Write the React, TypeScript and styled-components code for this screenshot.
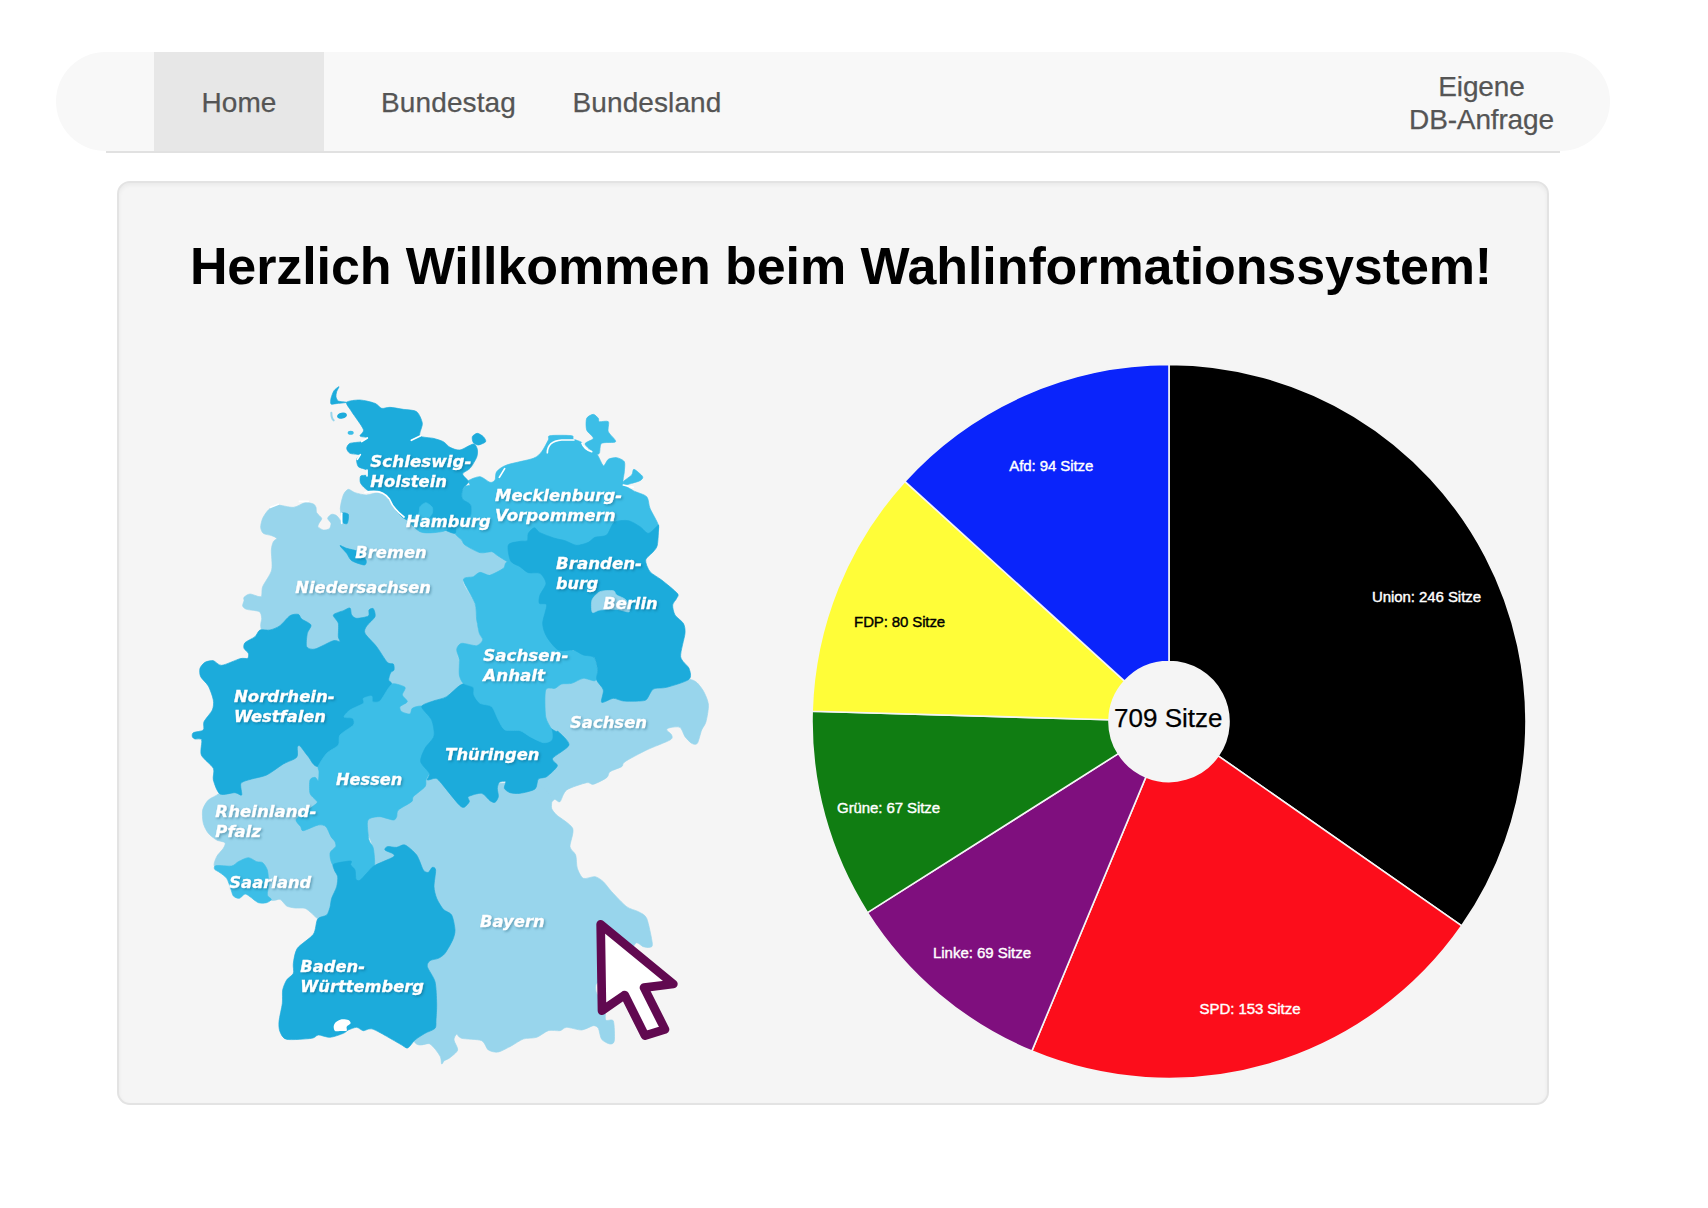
import React from "react";
import styled, { createGlobalStyle } from "styled-components";

const GlobalStyle = createGlobalStyle`
  body {
    margin: 0;
    background: #ffffff;
    font-family: "Liberation Sans", Arial, Helvetica, sans-serif;
  }
`;

const Page = styled.div`
  box-sizing: border-box;
  width: 1708px;
  height: 1208px;
  padding: 52px 98px 0 56px;
  background: #ffffff;
`;

const NavBar = styled.nav`
  display: flex;
  flex-direction: column;
  height: 101px;
`;

const NavItems = styled.div`
  display: flex;
  height: 99px;
  box-sizing: border-box;
  padding: 0 55px 0 98px;
  align-items: stretch;
  background: #f8f8f8;
  border-radius: 50px;
`;

const NavRule = styled.div`
  height: 2px;
  margin: 0 50px;
  background: #e1e1e1;
`;

const NavLink = styled.a<{ $active?: boolean; $width: number; $push?: boolean }>`
  display: flex;
  align-items: center;
  justify-content: center;
  text-align: center;
  white-space: nowrap;
  width: ${(p) => p.$width}px;
  margin-left: ${(p) => (p.$push ? "auto" : "0")};
  padding-top: ${(p) => (p.$push ? 3 : 1)}px;
  box-sizing: border-box;
  font-size: 28px;
  line-height: 33px;
  letter-spacing: ${(p) => (p.$push ? -0.15 : 0.1)}px;
  color: #555555;
  -webkit-text-stroke: 0.25px #555555;
  text-decoration: none;
  background: ${(p) => (p.$active ? "#e7e7e7" : "transparent")};
`;

const NavGap = styled.span`
  width: 29px;
`;

const Well = styled.main`
  box-sizing: border-box;
  width: 1432px;
  height: 924px;
  margin: 28px 0 0 61px;
  border: 2px solid #e3e3e3;
  border-radius: 13px;
  background: #f5f5f5;
  box-shadow: inset 0 2px 4px rgba(0, 0, 0, 0.05);
`;

const Title = styled.h1`
  margin: 0;
  height: 182px;
  box-sizing: border-box;
  padding: 53px 0 0 16px;
  text-align: center;
  white-space: nowrap;
  font-size: 52px;
  line-height: 60px;
  letter-spacing: -0.09px;
  font-weight: bold;
  color: #000000;
`;

const Figures = styled.div`
  display: flex;
  align-items: flex-start;
  gap: 89px;
  padding-left: 61px;
`;

const MapDrawing = styled.svg`
  display: block;
  flex: none;
  width: 540px;
  height: 730px;
  margin-top: 5px;
`;

const MapLabel = styled.text`
  font-family: "DejaVu Sans", Verdana, sans-serif;
  font-weight: bold;
  font-style: italic;
  font-size: 48px;
  fill: #ffffff;
  stroke: #ffffff;
  stroke-width: 1px;
  filter: drop-shadow(4px 4px 3px rgba(0, 60, 90, 0.36));
`;

const Chart = styled.svg`
  display: block;
  flex: none;
  width: 720px;
  height: 720px;
`;

const SliceLabel = styled.text`
  font-size: 15px;
  text-anchor: middle;
  stroke-width: 0.4px;
`;

const TotalLabel = styled.text`
  font-size: 26px;
  text-anchor: middle;
  fill: #000000;
  stroke: #000000;
  stroke-width: 0.25px;
`;

const DARK = "#1cabdb";
const MID = "#3cbee7";
const LIGHT = "#98d5ec";

/* Closed Catmull-Rom curve through a list of "x,y" pairs. */
function outline(list: string): string {
  const p = list
    .trim()
    .split(/\s+/)
    .map((s) => s.split(",").map(Number));
  const n = p.length;
  const k = 0.13;
  let d = `M${p[0][0]} ${p[0][1]}`;
  for (let i = 0; i < n; i++) {
    const a = p[(i - 1 + n) % n];
    const b = p[i];
    const c = p[(i + 1) % n];
    const e = p[(i + 2) % n];
    d += `C${b[0] + (c[0] - a[0]) * k} ${b[1] + (c[1] - a[1]) * k} ${c[0] - (e[0] - b[0]) * k} ${c[1] - (e[1] - b[1]) * k} ${c[0]} ${c[1]}`;
  }
  return d + "Z";
}

const states: { name: string; fill: string; shape: string }[] = [
  {
    name: "Niedersachsen",
    fill: LIGHT,
    shape:
      "245,780 245,745 238,725 200,718 188,708 192,692 192,682 210,672 243,680 248,650 275,600 274,540 280,515 290,505 275,497 250,490 242,472 248,445 265,420 290,405 340,412 375,398 400,402 408,412 410,428 425,445 418,458 414,470 430,480 448,476 453,460 443,445 455,433 470,437 487,455 481,415 490,375 505,358 525,368 560,375 600,367 625,385 640,412 665,440 700,465 750,480 825,488 845,510 855,525 900,548 935,545 950,555 983,575 970,595 945,612 920,612 900,607 880,620 850,630 855,650 880,690 888,715 890,760 898,790 908,812 890,827 845,820 830,838 838,880 842,915 850,935 830,955 810,975 780,990 750,1010 705,1040 640,1040 500,1000 300,860",
  },
  {
    name: "Rheinland-Pfalz",
    fill: LIGHT,
    shape:
      "120,1268 85,1290 68,1320 70,1360 85,1390 110,1410 135,1418 130,1435 110,1460 104,1490 150,1510 180,1550 270,1590 300,1588 320,1608 345,1614 375,1615 395,1630 415,1647 435,1640 470,1580 490,1460 500,1300 440,1190 350,1110 185,1200",
  },
  {
    name: "Sachsen",
    fill: LIGHT,
    shape:
      "1080,960 1125,950 1145,940 1175,938 1210,920 1300,920 1400,945 1527,928 1565,955 1585,1002 1578,1055 1565,1080 1552,1120 1535,1120 1515,1100 1500,1072 1470,1073 1460,1080 1475,1095 1470,1110 1400,1140 1335,1175 1325,1190 1290,1205 1280,1223 1240,1243 1220,1238 1160,1260 1140,1295 1125,1288 1115,1295 1090,1300 1030,1280 1030,1150",
  },
  {
    name: "Bayern",
    fill: LIGHT,
    shape:
      "583,1485 575,1420 555,1370 560,1330 630,1330 690,1280 735,1220 780,1215 860,1240 1060,1240 1105,1270 1115,1290 1115,1315 1130,1335 1178,1375 1170,1430 1187,1455 1192,1495 1210,1525 1245,1520 1270,1535 1295,1565 1340,1610 1375,1625 1400,1645 1417,1720 1410,1732 1390,1730 1370,1718 1355,1735 1300,1790 1255,1835 1247,1848 1250,1870 1275,1915 1277,1950 1300,1953 1303,2012 1290,2022 1265,2008 1255,1975 1240,1967 1205,1980 1160,1972 1140,1982 1105,1982 1070,2002 1030,2007 995,2027 955,2046 925,2040 905,2012 845,2005 830,1993 822,2010 833,2040 810,2063 793,2072 785,2082 780,2058 750,2022 700,2010 650,1800 600,1600",
  },
  {
    name: "Mecklenburg-Vorpommern",
    fill: MID,
    shape:
      "845,370 855,350 870,345 865,332 900,320 930,337 945,330 950,305 980,285 1060,265 1085,245 1105,210 1110,197 1175,197 1180,207 1205,217 1215,235 1250,252 1270,287 1285,268 1310,263 1333,275 1333,305 1330,340 1360,362 1400,380 1410,415 1435,465 1430,490 1400,540 1100,560 1000,575 983,575 950,555 935,545 900,548 855,525 845,510 825,490 830,465 870,440 872,405 850,392",
  },
  {
    name: "Rügen",
    fill: MID,
    shape:
      "1220,180 1220,145 1240,133 1255,145 1258,155 1285,155 1285,185 1307,215 1265,220 1258,250 1245,250 1215,222 1240,205",
  },
  { name: "Usedom", fill: MID, shape: "1335,345 1330,335 1355,315 1362,298 1388,320 1380,332 1355,340" },
  {
    name: "Schleswig-Holstein",
    fill: DARK,
    shape:
      "500,97 540,90 585,100 605,115 630,112 670,118 710,125 727,160 720,197 760,205 790,215 810,232 840,240 880,222 892,238 890,262 870,295 848,312 865,335 850,355 845,375 850,390 872,405 870,440 830,465 825,490 790,480 760,485 700,460 665,440 640,410 625,385 600,363 565,362 542,340 542,318 560,315 560,300 535,290 530,268 540,255 510,250 500,235 510,220 545,215 562,203 540,198 550,178 515,125",
  },
  { name: "Fehmarn", fill: DARK, shape: "877,200 892,190 910,200 917,215 895,225 880,218" },
  { name: "Sylt", fill: DARK, shape: "477,50 462,62 453,85 453,102 468,101 500,97 475,93 468,80 470,65" },
  { name: "Hamburg", fill: MID, shape: "685,450 715,432 720,410 738,398 757,412 757,430 750,445 790,455 800,480 760,488 720,485" },
  { name: "Bremerhaven", fill: DARK, shape: "485,430 505,433 502,460 488,457" },
  { name: "Bremen", fill: DARK, shape: "480,527 500,535 535,545 558,570 553,585 515,572 500,550" },
  {
    name: "Nordrhein-Westfalen",
    fill: DARK,
    shape:
      "240,780 225,800 195,818 192,835 205,850 203,865 180,866 125,886 100,872 75,877 60,895 62,920 85,948 100,990 97,1020 72,1055 70,1080 40,1088 37,1100 45,1107 65,1110 64,1155 100,1195 100,1230 120,1272 165,1268 185,1275 183,1240 215,1227 260,1215 310,1182 350,1162 352,1132 360,1128 385,1160 415,1190 500,1150 560,1020 600,995 635,945 626,930 632,908 642,900 640,882 622,877 590,830 555,790 560,768 585,740 580,716 567,720 565,738 530,745 515,735 510,714 490,722 460,735 475,760 475,800 480,815 460,812 405,837 380,830 382,790 393,765 365,747 355,733 330,737 300,767 270,780",
  },
  {
    name: "Hessen",
    fill: MID,
    shape:
      "415,1188 440,1150 475,1125 480,1095 520,1065 518,1045 492,1041 510,1020 550,1000 550,985 575,978 578,995 600,993 625,955 640,941 675,952 667,975 682,995 660,1010 665,1025 690,1032 697,1015 725,1008 780,1020 780,1180 748,1212 738,1230 735,1250 700,1280 695,1295 655,1320 650,1340 640,1350 600,1340 570,1345 562,1360 567,1410 580,1435 583,1490 560,1530 528,1535 462,1490 450,1450 467,1430 465,1415 453,1400 438,1370 415,1365 370,1382 362,1370 348,1350 370,1330 410,1300 407,1290 390,1270 390,1230 405,1222 415,1232 417,1205",
  },
  {
    name: "Baden-Württemberg",
    fill: DARK,
    shape:
      "462,1482 512,1473 512,1485 525,1500 528,1528 540,1531 560,1510 583,1487 638,1462 640,1452 615,1440 622,1430 650,1432 675,1425 710,1455 730,1500 745,1507 757,1492 767,1500 762,1550 770,1585 790,1618 815,1635 825,1680 818,1710 795,1750 775,1765 750,1772 742,1790 765,1835 770,1900 768,1950 765,1975 735,1990 705,2010 683,2034 660,2022 580,1978 550,1982 530,1972 505,1980 490,1990 450,2002 415,1995 395,2005 320,2008 300,1985 297,1955 307,1900 308,1860 320,1830 340,1810 340,1780 352,1735 400,1693 413,1647 440,1635 450,1612 455,1585 470,1550 473,1520 463,1500",
  },
  {
    name: "Saarland",
    fill: MID,
    shape:
      "104,1498 108,1487 155,1488 175,1475 205,1463 230,1475 248,1478 262,1500 266,1540 262,1575 274,1588 260,1598 235,1598 210,1580 195,1572 178,1585 160,1578 152,1555 140,1525 120,1508",
  },
  {
    name: "Thüringen",
    fill: DARK,
    shape:
      "845,943 900,930 1000,1000 1120,1080 1135,1085 1167,1125 1118,1165 1132,1188 1100,1220 1075,1227 1065,1257 1020,1270 990,1268 973,1255 977,1235 958,1237 952,1255 955,1280 945,1297 930,1292 905,1270 865,1280 868,1295 852,1312 835,1302 780,1235 765,1225 742,1230 748,1210 722,1175 735,1135 762,1098 755,1050 725,1010 760,993 800,980",
  },
  {
    name: "Sachsen-Anhalt",
    fill: MID,
    shape:
      "850,630 880,620 900,607 930,615 970,595 983,575 1050,580 1120,620 1150,820 1210,845 1242,862 1253,905 1245,932 1210,925 1175,940 1145,942 1125,955 1097,960 1097,1040 1115,1080 1115,1110 1090,1118 1050,1100 1020,1082 975,1080 955,1050 935,1010 900,1000 882,975 880,952 850,940 838,915 838,870 830,838 845,820 890,827 908,810 898,790 890,750 885,700",
  },
  {
    name: "Brandenburg",
    fill: DARK,
    shape:
      "985,525 1020,514 1042,512 1045,490 1063,473 1080,488 1125,505 1155,512 1190,526 1225,517 1245,502 1280,495 1303,457 1345,452 1380,470 1405,490 1430,470 1436,468 1432,525 1420,545 1397,570 1410,605 1445,630 1492,670 1490,685 1478,705 1485,735 1510,760 1515,790 1502,860 1527,895 1527,928 1460,952 1420,957 1400,988 1380,993 1330,993 1300,985 1265,997 1270,960 1250,930 1253,900 1242,862 1210,855 1180,840 1135,840 1100,800 1088,760 1100,705 1078,700 1080,675 1098,640 1080,610 1045,608 1020,590 992,573",
  },
  { name: "Berlin", fill: LIGHT, shape: "1237,727 1236,690 1260,665 1300,662 1310,675 1338,690 1348,725 1310,718 1260,720" },
];

/* text, x, baseline, width */
const labels: [string, number, number, number][] = [
  ["Schleswig-", 571, 291, 303],
  ["Holstein", 571, 351, 230],
  ["Hamburg", 678, 471, 254],
  ["Bremen", 526, 564, 214],
  ["Niedersachsen", 346, 669, 407],
  ["Mecklenburg-", 945, 393, 381],
  ["Vorpommern", 945, 453, 362],
  ["Branden-", 1128, 597, 258],
  ["burg", 1128, 657, 127],
  ["Berlin", 1270, 716, 163],
  ["Sachsen-", 910, 873, 255],
  ["Anhalt", 910, 933, 185],
  ["Sachsen", 1170, 1075, 231],
  ["Thüringen", 796, 1170, 282],
  ["Nordrhein-", 162, 996, 302],
  ["Westfalen", 162, 1056, 276],
  ["Hessen", 468, 1244, 199],
  ["Rheinland-", 106, 1341, 303],
  ["Pfalz", 106, 1401, 137],
  ["Saarland", 148, 1555, 246],
  ["Baden-", 361, 1807, 194],
  ["Württemberg", 361, 1867, 371],
  ["Bayern", 900, 1671, 194],
];

const coastLines = [
  "M555 368Q605 355 628 387Q640 417 672 441",
  "M545 215L562 204M694 211L722 197M532 268L541 254M561 300V318",
  "M1102 248Q1102 214 1145 210H1182",
  "M1206 220Q1212 238 1235 245",
  "M958 322L974 296",
  "M1330 345L1360 352",
  "M272 412L295 403M358 394L385 394",
  "M485 430V460",
];

function GermanyMap() {
  return (
    <MapDrawing viewBox="0 0 1620 2190">
      {states.map((s) => (
        <path key={s.name} d={outline(s.shape)} fill={s.fill} stroke={s.fill} strokeWidth={2} strokeLinejoin="round" />
      ))}
      <ellipse cx="486" cy="137" rx="15" ry="9" fill={DARK} transform="rotate(-12 486 137)" />
      <ellipse cx="512" cy="188" rx="9" ry="6" fill={MID} />
      <path d="M454 128Q454 145 461 151" stroke={LIGHT} strokeWidth={6} strokeLinecap="round" fill="none" />
      {coastLines.map((d) => (
        <path key={d} d={d} fill="none" stroke="#ffffff" strokeWidth={5} strokeLinecap="round" />
      ))}
      <path d={outline("461,1970 467,1957 485,1948 505,1950 512,1960 500,1970 500,1982 480,1983 465,1983")} fill="#ffffff" />
      {labels.map(([text, x, y, width]) => (
        <MapLabel key={text} x={x} y={y} textLength={width} lengthAdjust="spacingAndGlyphs">
          {text}
        </MapLabel>
      ))}
      <path
        d="M1262 1663L1480 1842L1392 1853L1455 1978L1395 1997L1334 1875L1266 1922Z"
        fill="#ffffff"
        stroke="#610950"
        strokeWidth={26}
        strokeLinejoin="round"
      />
    </MapDrawing>
  );
}

const parties = [
  { name: "Union", seats: 246, fill: "#000000", ink: "#ffffff", x: 617.5, y: 237.3, width: 109 },
  { name: "SPD", seats: 153, fill: "#fc0d1b", ink: "#ffffff", x: 441, y: 649, width: 101 },
  { name: "Linke", seats: 69, fill: "#7f0f7e", ink: "#ffffff", x: 173, y: 593, width: 98 },
  { name: "Grüne", seats: 67, fill: "#107d12", ink: "#ffffff", x: 79.6, y: 448, width: 103 },
  { name: "FDP", seats: 80, fill: "#fffd38", ink: "#000000", x: 90.6, y: 262, width: 91 },
  { name: "Afd", seats: 94, fill: "#0a24fb", ink: "#ffffff", x: 242.3, y: 105.5, width: 84 },
];

function slicePath(from: number, to: number) {
  const outer = 357;
  const inner = 60;
  const at = (r: number, a: number) => `${360 + r * Math.sin(a)} ${356.5 - r * Math.cos(a)}`;
  const large = to - from > Math.PI ? 1 : 0;
  return `M${at(outer, from)}A${outer} ${outer} 0 ${large} 1 ${at(outer, to)}L${at(inner, to)}A${inner} ${inner} 0 ${large} 0 ${at(inner, from)}Z`;
}

function SeatChart() {
  const total = parties.reduce((sum, p) => sum + p.seats, 0);
  let used = 0;
  const slices = parties.map((p) => {
    const from = (used / total) * Math.PI * 2;
    used += p.seats;
    return { ...p, d: slicePath(from, (used / total) * Math.PI * 2) };
  });
  return (
    <Chart viewBox="0 0 720 720">
      {slices.map((s) => (
        <path key={s.name} d={s.d} fill={s.fill} stroke="#f5f5f5" strokeWidth={1.6} strokeLinejoin="round" />
      ))}
      {slices.map((s) => (
        <SliceLabel key={s.name} x={s.x} y={s.y} fill={s.ink} stroke={s.ink} textLength={s.width}>
          {`${s.name}: ${s.seats} Sitze`}
        </SliceLabel>
      ))}
      <TotalLabel x={359.3} y={362}>{`${total} Sitze`}</TotalLabel>
    </Chart>
  );
}

export default function App() {
  return (
    <Page>
      <GlobalStyle />
      <NavBar>
        <NavItems>
          <NavLink $active $width={170}>
            Home
          </NavLink>
          <NavGap />
          <NavLink $width={191}>Bundestag</NavLink>
          <NavLink $width={206}>Bundesland</NavLink>
          <NavLink $width={147} $push>
            Eigene
            <br />
            DB-Anfrage
          </NavLink>
        </NavItems>
        <NavRule />
      </NavBar>
      <Well>
        <Title>Herzlich Willkommen beim Wahlinformationssystem!</Title>
        <Figures>
          <GermanyMap />
          <SeatChart />
        </Figures>
      </Well>
    </Page>
  );
}
